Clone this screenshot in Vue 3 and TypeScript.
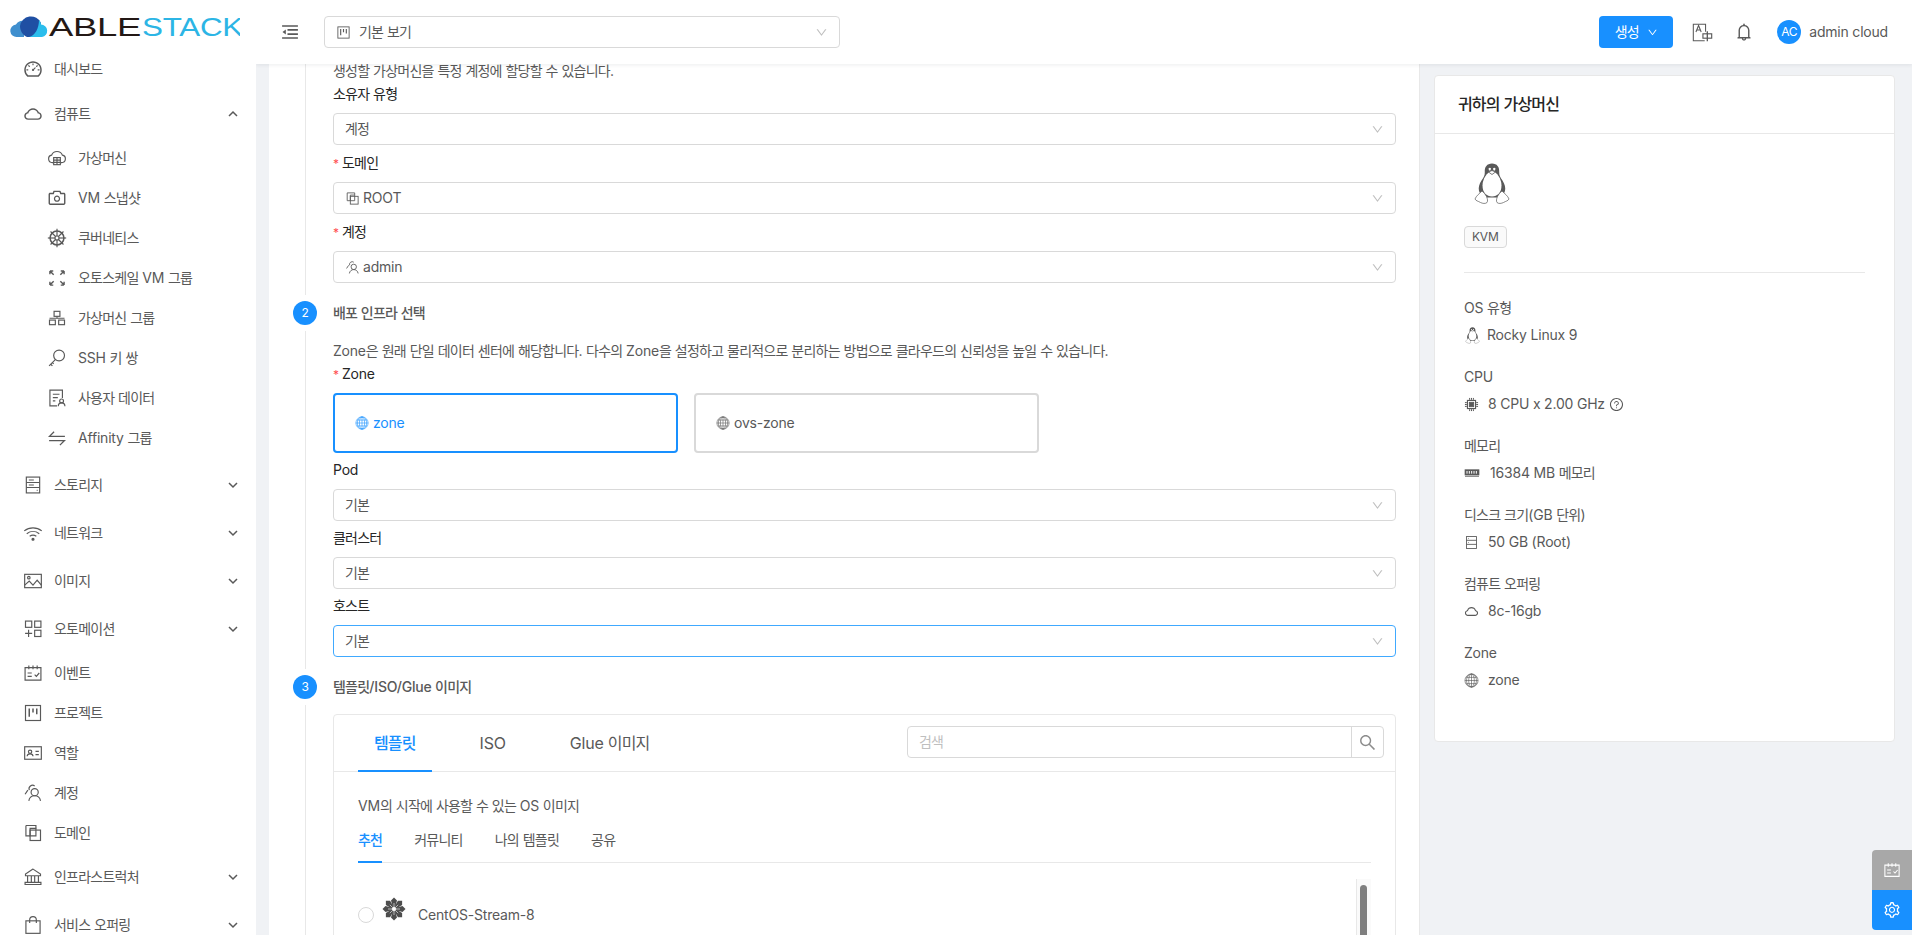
<template>
  <div class="layout">
    <aside class="sider">
      <div class="logo">
        <svg width="240" height="49" viewBox="0 0 240 49">
          <path d="M24 37H17a6.200 6.200 0 0 1-1-12.400A8 8 0 0 1 24 21z" fill="#3f8fce" />
          <path d="M20 26a11 11 0 0 1 21-3c0 7-3 14-9 14h-5c-4-2-7-6-7-11z" fill="#1f4fa3" />
          <path d="M39 20c1 1 2 3 2 4.500a6.300 6.300 0 0 1 1 12.500H29c6-1 10-9 10-17z" fill="#2bbdec" />
          <text x="49" y="36" class="logo-text" fill="#231815" textLength="92" lengthAdjust="spacingAndGlyphs">ABLE</text>
          <text x="142" y="36" class="logo-text" fill="#2cb5e5" textLength="101" lengthAdjust="spacingAndGlyphs">STACK</text>
        </svg>
      </div>
      <template v-for="item in menu" :key="item.label">
        <div class="menu-item" :class="{ submenu: item.arrow, first: item.label === '대시보드' }">
          <Icon :name="item.icon" :size="20" />
          <T :text="item.label" />
          <svg v-if="item.arrow" class="arrow" :class="{ up: item.children }" width="10" height="10" viewBox="0 0 10 10">
            <path d="M1 3l4 4 4-4" fill="none" stroke="currentColor" stroke-width="1.500" />
          </svg>
        </div>
        <div v-if="item.children" class="children">
          <div v-for="child in item.children" :key="child.label" class="menu-item child">
            <Icon :name="child.icon" :size="20" />
            <T :text="child.label" />
          </div>
        </div>
      </template>
    </aside>

    <div class="body">
      <header class="topbar">
        <Icon name="fold" :size="20" />
        <div class="select view-select">
          <Icon name="project" :size="15" />
          <T text="기본 보기" />
          <Icon name="down" :size="13" class="chev" />
        </div>
        <div class="top-right">
          <button class="create"><T text="생성" /> <Icon name="down" :size="11" /></button>
          <Icon name="translate" :size="21" class="translate" />
          <Icon name="bell" :size="20" class="bell" />
          <span class="avatar">AC</span>
          <span class="user">admin cloud</span>
        </div>
      </header>

      <div class="content">
        <main class="panel">
          <section class="step">
            <div class="rail"><span class="line"></span></div>
            <div class="step-body first-body">
              <p class="clip-desc"><T text="생성할 가상머신을 특정 계정에 할당할 수 있습니다." /></p>
              <div v-for="f in ownerFields" :key="f.label" class="field">
                <label class="label"><i v-if="f.required" class="req">*</i><T :text="f.label" /></label>
                <div class="select">
                  <Icon v-if="f.icon" :name="f.icon" :size="15" />
                  <T :text="f.value" />
                  <Icon name="down" :size="13" class="chev" />
                </div>
              </div>
            </div>
          </section>

          <section class="step">
            <div class="rail"><span class="dot">2</span><span class="line"></span></div>
            <div class="step-body">
              <h4 class="step-title"><T text="배포 인프라 선택" /></h4>
              <p class="desc"><T text="Zone은 원래 단일 데이터 센터에 해당합니다. 다수의 Zone을 설정하고 물리적으로 분리하는 방법으로 클라우드의 신뢰성을 높일 수 있습니다." /></p>
              <label class="label zone-label"><i class="req">*</i>Zone</label>
              <div class="zones">
                <div class="zone active"><Icon name="global" :size="14" /> zone</div>
                <div class="zone"><Icon name="global" :size="14" /> ovs-zone</div>
              </div>
              <div v-for="f in infraFields" :key="f" class="field compact">
                <label class="label"><T :text="f" /></label>
                <div class="select" :class="{ focused: f === '호스트' }">
                  <T text="기본" />
                  <Icon name="down" :size="13" class="chev" />
                </div>
              </div>
            </div>
          </section>

          <section class="step grow">
            <div class="rail"><span class="dot">3</span><span class="line"></span></div>
            <div class="step-body">
              <h4 class="step-title"><T text="템플릿/ISO/Glue 이미지" /></h4>
              <div class="image-card">
                <div class="image-tabs">
                  <div class="tabs-big">
                    <span v-for="(t, i) in bigTabs" :key="t" class="big-tab" :class="{ on: i === 0 }"><T :text="t" /></span>
                  </div>
                  <div class="search">
                    <span class="search-input"><T text="검색" /></span>
                    <span class="search-btn"><Icon name="search" :size="19" /></span>
                  </div>
                </div>
                <div class="image-body">
                  <p class="image-desc"><T text="VM의 시작에 사용할 수 있는 OS 이미지" /></p>
                  <div class="tabs-small">
                    <span v-for="(t, i) in smallTabs" :key="t" class="small-tab" :class="{ on: i === 0 }"><T :text="t" /></span>
                  </div>
                  <div class="list">
                    <div class="row">
                      <span class="radio"></span>
                      <Icon name="centos" :size="24" class="centos" />
                      <span>CentOS-Stream-8</span>
                    </div>
                    <div class="scrollbar"><span class="thumb"></span></div>
                  </div>
                </div>
              </div>
            </div>
          </section>
        </main>

        <aside class="summary">
          <div class="summary-title"><T text="귀하의 가상머신" /></div>
          <div class="summary-body">
            <Icon name="tux" :size="42" vb="0 0 36 42" class="tux" />
            <span class="tag">KVM</span>
            <div class="divider"></div>
            <div v-for="r in summary" :key="r.label" class="info">
              <div class="info-label"><T :text="r.label" /></div>
              <div class="info-value">
                <Icon :name="r.icon" :size="r.size || 15" :vb="r.vb" :style="{ marginRight: r.gap + 'px' }" />
                <T :text="r.value" />
                <Icon v-if="r.help" name="help" :size="15" class="help" />
              </div>
            </div>
          </div>
        </aside>
      </div>
    </div>

    <div class="float-btns">
      <span class="float grey"><Icon name="schedule" /></span>
      <span class="float blue"><Icon name="gear" /></span>
    </div>
  </div>
</template>

<script setup lang="ts">
import { h, type FunctionalComponent } from 'vue'

// 1024 grid ant style outlines go through this, hand drawn ones are 24 grid strokes
const ant = (d: string) => `<path transform="scale(.0234375)" fill="currentColor" stroke="none" d="${d}"/>`

const spokes = [0, 45, 90, 135, 180, 225, 270, 315]

const icons: Record<string, string> = {
  dashboard: ant('M924.8 385.6a446.7 446.7 0 00-96-142.4 446.7 446.7 0 00-142.4-96C631.1 123.8 572.5 112 512 112s-119.1 11.8-174.4 35.2a446.7 446.7 0 00-142.4 96 446.7 446.7 0 00-96 142.4C75.8 440.9 64 499.5 64 560c0 132.7 58.3 257.7 159.9 343.1l1.7 1.4c5.8 4.8 13.1 7.5 20.6 7.5h531.7c7.5 0 14.8-2.7 20.6-7.5l1.7-1.4C901.7 817.7 960 692.7 960 560c0-60.5-11.9-119.1-35.2-174.4zM761.4 836H262.6A371.12 371.12 0 01140 560c0-99.4 38.7-192.8 109-263 70.3-70.3 163.7-109 263-109 99.4 0 192.8 38.7 263 109 70.3 70.3 109 163.7 109 263 0 105.6-44.5 205.5-122.6 276zM623.5 421.5a8.03 8.03 0 00-11.3 0L527.7 506c-18.7-5-39.4-.2-54.1 14.5a55.95 55.95 0 000 79.2 55.95 55.95 0 0079.2 0 55.87 55.87 0 0014.5-54.1l84.5-84.5c3.1-3.1 3.1-8.2 0-11.3l-28.3-28.3zM490 320h44c4.4 0 8-3.6 8-8v-80c0-4.4-3.6-8-8-8h-44c-4.4 0-8 3.6-8 8v80c0 4.4 3.6 8 8 8zm260 218v44c0 4.4 3.6 8 8 8h80c4.4 0 8-3.6 8-8v-44c0-4.4-3.6-8-8-8h-80c-4.4 0-8 3.6-8 8zm12.7-197.2l-31.1-31.1a8.03 8.03 0 00-11.3 0l-56.6 56.6a8.03 8.03 0 000 11.3l31.1 31.1c3.1 3.1 8.2 3.1 11.3 0l56.6-56.6c3.1-3.1 3.1-8.2 0-11.3zm-458.6-31.1a8.03 8.03 0 00-11.3 0l-31.1 31.1a8.03 8.03 0 000 11.3l56.6 56.6c3.1 3.1 8.2 3.1 11.3 0l31.1-31.1c3.1-3.1 3.1-8.2 0-11.3l-56.6-56.6zM262 530h-80c-4.4 0-8 3.6-8 8v44c0 4.4 3.6 8 8 8h80c4.4 0 8-3.6 8-8v-44c0-4.4-3.6-8-8-8z'),
  cloud: ant('M811.4 418.7C765.6 297.9 648.9 212 512.2 212S258.8 297.8 213 418.6C127.3 441.1 64 519.1 64 612c0 110.5 89.5 200 199.9 200h496.2C870.5 812 960 722.5 960 612c0-92.7-63.1-170.7-148.6-193.3zm36.3 281a123.07 123.07 0 01-87.6 36.3H263.9c-33.1 0-64.2-12.9-87.6-36.3A123.3 123.3 0 01140 612c0-28 9.1-54.3 26.2-76.3a125.7 125.7 0 0166.1-43.7l37.9-9.9 13.9-36.6c8.6-22.8 20.6-44.1 35.7-63.4a245.6 245.6 0 0152.4-49.9c41.1-28.9 89.5-44.2 140-44.2s98.9 15.3 140 44.2c19.9 14 37.5 30.8 52.4 49.9 15.1 19.3 27.1 40.6 35.7 63.4l13.8 36.5 37.8 10c54.3 14.5 92.1 63.8 92.1 120 0 33.1-12.9 64.3-36.3 87.7z'),
  down: ant('M884 256h-75c-5.1 0-9.9 2.5-12.9 6.6L512 654.2 227.9 262.6c-3-4.1-7.8-6.6-12.9-6.6h-75c-6.5 0-10.3 7.4-6.5 12.7l352.6 486.1c12.8 17.6 39 17.6 51.7 0l352.6-486.1c3.9-5.3.1-12.7-6.4-12.7z'),
  camera: ant('M864 248H728l-32.4-90.8a32.07 32.07 0 00-30.2-21.2H358.6c-13.5 0-25.6 8.5-30.1 21.2L296 248H160c-44.2 0-80 35.8-80 80v456c0 44.2 35.8 80 80 80h704c44.2 0 80-35.8 80-80V328c0-44.2-35.8-80-80-80zm8 536c0 4.4-3.6 8-8 8H160c-4.4 0-8-3.6-8-8V328c0-4.4 3.6-8 8-8h186.7l17.1-47.8 22.9-64.2h250.5l22.9 64.2 17.1 47.8H864c4.4 0 8 3.6 8 8v456zM512 384c-88.4 0-160 71.6-160 160s71.6 160 160 160 160-71.6 160-160-71.6-160-160-160zm0 256c-53 0-96-43-96-96s43-96 96-96 96 43 96 96-43 96-96 96z'),
  search: ant('M909.6 854.5L649.9 594.8C690.2 542.7 712 479 712 412c0-80.2-31.3-155.4-87.9-212.1-56.6-56.7-132-87.9-212.1-87.9s-155.5 31.3-212.1 87.9C143.2 256.5 112 331.8 112 412c0 80.1 31.3 155.5 87.9 212.1C256.5 680.8 331.8 712 412 712c67 0 130.6-21.8 182.7-62l259.7 259.6a8.2 8.2 0 0011.6 0l43.6-43.5a8.2 8.2 0 000-11.6zM570.4 570.4C528 612.7 471.8 636 412 636s-116-23.3-158.4-65.6C211.3 528 188 471.8 188 412s23.3-116.1 65.6-158.4C296 211.3 352.2 188 412 188s116.1 23.2 158.4 65.6S636 352.2 636 412s-23.3 116.1-65.6 158.4z'),
  bell: ant('M816 768h-24V428c0-141.1-104.3-257.7-240-277.1V112c0-22.1-17.9-40-40-40s-40 17.9-40 40v38.9c-135.7 19.4-240 136-240 277.1v340h-24c-17.7 0-32 14.3-32 32v32c0 4.4 3.6 8 8 8h216c0 61.8 50.2 112 112 112s112-50.2 112-112h216c4.4 0 8-3.6 8-8v-32c0-17.7-14.3-32-32-32zM512 888c-26.5 0-48-21.5-48-48h96c0 26.5-21.500 48-48 48zM304 768V428c0-55.6 21.6-107.8 60.9-147.1S456.4 220 512 220c55.6 0 107.8 21.6 147.1 60.9S720 372.4 720 428v340H304z'),
  help: ant('M512 64C264.6 64 64 264.6 64 512s200.6 448 448 448 448-200.6 448-448S759.4 64 512 64zm0 820c-205.4 0-372-166.6-372-372s166.6-372 372-372 372 166.6 372 372-166.6 372-372 372z') + ant('M623.6 316.7C593.6 290.4 554 276 512 276s-81.6 14.5-111.6 40.7C369.2 344 352 380.7 352 420v7.6c0 4.4 3.6 8 8 8h48c4.4 0 8-3.6 8-8V420c0-44.1 43.1-80 96-80s96 35.9 96 80c0 31.1-22 59.6-56.1 72.7-21.2 8.1-39.2 22.3-52.1 40.9-13.1 19-19.9 41.8-19.9 64.9V620c0 4.4 3.6 8 8 8h48c4.4 0 8-3.6 8-8v-22.7a48.3 48.3 0 0130.9-44.8c59-22.7 97.1-74.7 97.1-132.5.1-39.3-17.1-76-48.3-103.3zM472 732a40 40 0 1080 0 40 40 0 10-80 0z'),
  gear: ant('M924.8 625.7l-65.5-56c3.1-19 4.7-38.4 4.7-57.8s-1.6-38.8-4.7-57.8l65.5-56a32.03 32.03 0 009.3-35.2l-.9-2.6a443.74 443.74 0 00-79.7-137.9l-1.8-2.1a32.12 32.12 0 00-35.1-9.5l-81.3 28.9c-30-24.6-63.5-44-99.7-57.6l-15.7-85a32.05 32.05 0 00-25.8-25.7l-2.7-.5c-52.1-9.4-106.9-9.4-159 0l-2.7.5a32.05 32.05 0 00-25.8 25.7l-15.8 85.4a351.86 351.86 0 00-99 57.4l-81.9-29.1a32 32 0 00-35.1 9.5l-1.8 2.1a446.02 446.02 0 00-79.7 137.9l-.9 2.6c-4.5 12.5-.8 26.5 9.3 35.2l66.3 56.6c-3.1 18.8-4.6 38-4.6 57.1 0 19.2 1.5 38.4 4.6 57.1L99 625.5a32.03 32.03 0 00-9.3 35.2l.9 2.6c18.1 50.4 44.9 96.9 79.7 137.9l1.8 2.1a32.12 32.12 0 0035.1 9.5l81.9-29.1c29.8 24.5 63.1 43.9 99 57.4l15.8 85.4a32.05 32.05 0 0025.8 25.7l2.7.5a449.4 449.4 0 00159 0l2.7-.5a32.05 32.05 0 0025.8-25.7l15.7-85a350 350 0 0099.7-57.6l81.3 28.9a32 32 0 0035.1-9.5l1.8-2.1c34.8-41.1 61.6-87.5 79.7-137.9l.9-2.6c4.5-12.3.8-26.3-9.3-35zM788.3 465.9c2.5 15.1 3.8 30.6 3.8 46.1s-1.3 31-3.8 46.1l-6.6 40.1 74.7 63.9a370.03 370.03 0 01-42.6 73.6L721 702.8l-31.4 25.8c-23.9 19.6-50.5 35-79.3 45.8l-38.1 14.3-17.9 97a377.5 377.5 0 01-85 0l-17.9-97.2-37.8-14.5c-28.5-10.8-55-26.2-78.7-45.7l-31.4-25.9-93.4 33.2c-17-22.9-31.2-47.6-42.6-73.6l75.5-64.5-6.5-40c-2.4-14.9-3.7-30.3-3.7-45.5 0-15.3 1.2-30.6 3.7-45.5l6.5-40-75.5-64.5c11.3-26.1 25.6-50.7 42.6-73.6l93.4 33.2 31.4-25.9c23.7-19.5 50.2-34.9 78.7-45.7l37.9-14.3 17.9-97.2c28.1-3.2 56.8-3.2 85 0l17.9 97 38.1 14.3c28.7 10.8 55.4 26.2 79.3 45.8l31.4 25.8 92.8-32.9c17 22.9 31.2 47.6 42.6 73.6L781.8 426l6.5 39.9zM512 326c-97.2 0-176 78.8-176 176s78.8 176 176 176 176-78.8 176-176-78.8-176-176-176zm79.2 255.2A111.6 111.6 0 01512 614c-29.9 0-58-11.7-79.2-32.8A111.6 111.6 0 01400 502c0-29.9 11.7-58 32.8-79.2C454 401.6 482.1 390 512 390c29.9 0 58 11.6 79.2 32.8A111.6 111.6 0 01624 502c0 29.9-11.7 58-32.8 79.2z'),
  vm: '<path d="M7.500 17.500H6.500a4.500 4.500 0 0 1-1-8.900 7 7 0 0 1 13 0 4.500 4.500 0 0 1-1 8.900h-1"/><rect x="8" y="11.500" width="8" height="8.500"/><path d="M8 14.500h8M8 17.200h8M12 11.500v8.500"/>',
  wheel: `<circle cx="12" cy="12" r="8.300" stroke-width="1.800"/><circle cx="12" cy="12" r="2.400"/>${spokes.map(a => `<path transform="rotate(${a} 12 12)" d="M12 1v8.500" stroke-width="1.400"/>`).join('')}`,
  scale: '<g stroke-width="1.700"><path d="M3.500 3.500l4.500 4.500M3.500 3.500h4M3.500 3.500v4M20.500 3.500l-4.500 4.500M20.500 3.500h-4M20.500 3.500v4M3.500 20.500l4.500-4.500M3.500 20.500h4M3.500 20.500v-4M20.500 20.500l-4.500-4.500M20.500 20.500h-4M20.500 20.500v-4"/></g>',
  cluster: '<rect x="8.500" y="4" width="7" height="6"/><rect x="3" y="14.500" width="7" height="5.500"/><rect x="14" y="14.500" width="7" height="5.500"/><path d="M3 12.300h18M12 10v2.300" stroke-width="1.200"/>',
  key: '<circle cx="14.500" cy="9" r="6.500"/><path d="M10 14l-7.500 7.500M4.500 19.500l2 2M6.500 17.500l1.500 1.500"/>',
  solution: '<path d="M12 21.500H3.500v-19h15V12M7 7.500h8M7 11.500h6M7 15.500h3"/><circle cx="17.500" cy="15.500" r="2.300"/><path d="M13.500 22c0-2.500 1.800-4.200 4-4.200s4 1.700 4 4.200"/>',
  swap: '<path d="M21.500 10H3l5.500-5.500M2.500 15h18.500L15.500 20.500" stroke-width="1.500"/>',
  storage: '<rect x="4" y="2.500" width="16" height="19"/><path d="M4 9h16M4 15h16M7 6h6M7 12h6M16.500 18.500h1" />',
  wifi: '<path d="M1.500 9.500c6-5 15-5 21 0M4.500 12.800c4.500-3.500 10.500-3.500 15 0M8 16c2.500-1.700 5.500-1.700 8 0"/><circle cx="12" cy="19.500" r="1.200" fill="currentColor"/>',
  picture: '<rect x="2" y="4" width="20" height="16"/><circle cx="7" cy="8" r="1.500"/><path d="M2 17l5.500-5 4.500 5 5-6 5 6"/>',
  apps: '<rect x="3" y="2.500" width="7.500" height="7.500"/><rect x="14" y="2.500" width="7.500" height="7.500"/><rect x="14" y="13.500" width="7.500" height="7.500"/><path d="M6.700 13v8.500M2.500 17.200h8.500"/>',
  schedule: '<path d="M2.500 5.500h19v15h-19zM7 3v4.500M12 3v4.500M17 3v4.500"/><path d="M5.500 12h5M5.500 16h5M14 14l2 2 3.500-4"/>',
  project: '<rect x="3" y="3" width="18" height="18"/><path d="M7.500 6.500v10M12 6.500v5M16.500 6.500v7" stroke-width="1.800"/>',
  idcard: '<rect x="2" y="4.500" width="20" height="15"/><circle cx="8.500" cy="10.500" r="2"/><path d="M5 16c0-2 1.500-3 3.500-3s3.500 1 3.500 3M15 10h4M15 14h4"/>',
  team: '<circle cx="14" cy="11" r="4.300"/><path d="M7 21.500c.5-3.800 3.500-6.200 7-6.200s6.500 2.400 7 6.200"/><path d="M7.500 8.500A4.300 4.300 0 0 1 14 3.500M5.800 8.500l-3.300 5"/>',
  block: '<path d="M3.500 3h12v3.500M8.500 15.500H3.500V3"/><rect x="8.500" y="8.500" width="12.500" height="12.500"/><path d="M8.500 6.500h7v9h-7z"/>',
  bank: '<path d="M12 2.500L3 8.500v2h18v-2zM5.500 10.500v8M10 10.500v8M14 10.500v8M18.500 10.500v8M2.500 18.500h19v2.500h-19z"/>',
  bag: '<rect x="3.500" y="7" width="17" height="15"/><path d="M8 9.500V6a4 4 0 0 1 8 0v3.500"/>',
  fold: '<path d="M2.500 4.800h19M9 9.500h12.500M9 14.500h12.500M2.500 19.200h19" stroke-width="2"/><path d="M7 9v6l-4-3z" fill="currentColor" stroke="none"/>',
  translate: '<path d="M14.500 21.500H1.500V2.500h14V11" stroke-width="1.200"/><path d="M4.500 11.500l3-7.500 3 7.500M5.600 9.200h4" stroke-width="1.200"/><rect x="12.500" y="13.500" width="10" height="5" stroke-width="1.300"/><path d="M17.500 10.500v11.500" stroke-width="1.500"/>',
  global: '<g stroke-width="1"><circle cx="12" cy="12" r="10.500"/><ellipse cx="12" cy="12" rx="4.500" ry="10.500"/><ellipse cx="12" cy="12" rx="8" ry="10.500"/><path d="M12 1.500v21M1.500 12h21M3.500 7h17M3.500 17h17"/></g>',
  cpu: '<rect x="5.500" y="5.500" width="13" height="13" stroke-width="1.800"/><rect x="8.500" y="8.500" width="7" height="7" fill="currentColor"/><path d="M9 1.500v3M12 1.500v3M15 1.500v3M9 19.500v3M12 19.500v3M15 19.500v3M1.500 9h3M1.500 12h3M1.500 15h3M19.500 9h3M19.500 12h3M19.500 15h3" stroke-width="1.600"/>',
  memory: '<rect x="1" y="6.500" width="22" height="9" fill="currentColor" stroke="none"/><path d="M4.500 9v4M8 9v4M11.500 9v4M15 9v4M18.500 9v4" stroke="#fff" stroke-width="1.500"/><path d="M2 17h20" stroke-width="2" stroke-dasharray="2 1"/>',
  disk: '<rect x="4" y="2.500" width="16" height="19"/><path d="M4 8.500h16M4 15h16M7 5.500h1M7 12h1"/>',
  centos: `${spokes.map(a => `<path transform="rotate(${a} 12 12)" d="M12 .5l3 3-1.500 5.500L12 10.500 10.500 9 9 3.500z" fill="currentColor" stroke="none"/>`).join('')}<path d="M12 6v12M6 12h12M7.800 7.800l8.400 8.400M16.200 7.800l-8.400 8.400" stroke="#fff" stroke-width=".6"/>`,
  tux: '<path d="M18 .5c-5 0-7.500 3.500-7.200 8.500.2 3.500-1.300 5.500-3.300 8.500-2.200 3.400-3.300 7-2.500 10.500 1 3 3 5 6 6.500h14c3-1.500 5-3.500 6-6.500.8-3.500-.3-7-2.500-10.500-2-3-3.500-5-3.300-8.500C25.500 4 23 .5 18 .5z" fill="currentColor" stroke="none"/><path d="M18 8c-5 1-9.500 8-9.500 14.500 0 7 4 11 9.500 11s9.500-4 9.500-11C27.500 16 23 9 18 8z" fill="#fff" stroke="none"/><path d="M14.500 5.500c.8-1 2-1 2.500 0l-.5 2h-1.500zM19 5.500c.8-1 2-1 2.500 0l-.5 2h-1.500z" fill="#fff" stroke="none"/><path d="M14.500 9l3.500-1.500 3.500 1.500-3.500 2.500z" fill="#fff" stroke="currentColor" stroke-width=".8"/><path d="M8 28c-2 2-6 5-7 8 1 2 3 2 5.500 3.500 2 1 5 1.500 6.500 0 1-1.500.5-3.500-.5-6-1-2-2.500-4-4.500-5.500zM28 28c2 2 6 5 7 8-1 2-3 2-5.500 3.500-2 1-5 1.500-6.500 0-1-1.500-.5-3.500.5-6 1-2 2.500-4 4.500-5.500z" fill="#fff" stroke-width=".7"/>',
}

const Icon: FunctionalComponent<{ name: string; size?: number; vb?: string }> = (p) =>
  h('svg', {
    width: p.size ?? 18,
    height: p.size ?? 18,
    viewBox: p.vb ?? '0 0 24 24',
    fill: 'none',
    stroke: 'currentColor',
    'stroke-width': 1.4,
    class: 'ico',
    innerHTML: icons[p.name],
  })
Icon.props = ['name', 'size', 'vb']

// Hangul in the reference runs narrower than Noto Sans CJK, so those runs get tighter tracking
const T: FunctionalComponent<{ text: string }> = (p) =>
  h(
    'span',
    p.text.split(/([가-힣]+)/).map((run) => (/[가-힣]/.test(run) ? h('span', { class: 'hg' }, run) : run)),
  )
T.props = ['text']

interface MenuEntry {
  label: string
  icon: string
  arrow?: boolean
  children?: { label: string; icon: string }[]
}

const menu: MenuEntry[] = [
  { label: '대시보드', icon: 'dashboard' },
  {
    label: '컴퓨트',
    icon: 'cloud',
    arrow: true,
    children: [
      { label: '가상머신', icon: 'vm' },
      { label: 'VM 스냅샷', icon: 'camera' },
      { label: '쿠버네티스', icon: 'wheel' },
      { label: '오토스케일 VM 그룹', icon: 'scale' },
      { label: '가상머신 그룹', icon: 'cluster' },
      { label: 'SSH 키 쌍', icon: 'key' },
      { label: '사용자 데이터', icon: 'solution' },
      { label: 'Affinity 그룹', icon: 'swap' },
    ],
  },
  { label: '스토리지', icon: 'storage', arrow: true },
  { label: '네트워크', icon: 'wifi', arrow: true },
  { label: '이미지', icon: 'picture', arrow: true },
  { label: '오토메이션', icon: 'apps', arrow: true },
  { label: '이벤트', icon: 'schedule' },
  { label: '프로젝트', icon: 'project' },
  { label: '역할', icon: 'idcard' },
  { label: '계정', icon: 'team' },
  { label: '도메인', icon: 'block' },
  { label: '인프라스트럭처', icon: 'bank', arrow: true },
  { label: '서비스 오퍼링', icon: 'bag', arrow: true },
]

const ownerFields = [
  { label: '소유자 유형', value: '계정', required: false, icon: '' },
  { label: '도메인', value: 'ROOT', required: true, icon: 'block' },
  { label: '계정', value: 'admin', required: true, icon: 'team' },
]
const infraFields = ['Pod', '클러스터', '호스트']
const bigTabs = ['템플릿', 'ISO', 'Glue 이미지']
const smallTabs = ['추천', '커뮤니티', '나의 템플릿', '공유']

const summary = [
  { label: 'OS 유형', value: 'Rocky Linux 9', icon: 'tux', vb: '0 0 36 42', size: 17, gap: 6 },
  { label: 'CPU', value: '8 CPU x 2.00 GHz', icon: 'cpu', gap: 9, help: true },
  { label: '메모리', value: '16384 MB 메모리', icon: 'memory', size: 16, gap: 10 },
  { label: '디스크 크기(GB 단위)', value: '50 GB (Root)', icon: 'disk', gap: 9 },
  { label: '컴퓨트 오퍼링', value: '8c-16gb', icon: 'cloud', gap: 9 },
  { label: 'Zone', value: 'zone', icon: 'global', gap: 9 },
]
</script>

<style>
html,
body {
  margin: 0;
  height: 100%;
  overflow: hidden;
}

/* rendered from a functional component, a scoped rule would not reach it */
.hg {
  letter-spacing: -0.055em;
}
</style>

<style scoped>
.layout {
  display: flex;
  height: 935px;
  overflow: hidden;
  font-family: Inter, "Noto Sans CJK KR", sans-serif;
  font-size: 14px;
  line-height: 22px;
  letter-spacing: -0.2px;
  color: #595959;
  background: #f0f2f5;
}

.ico {
  flex: none;
  display: block;
}

/* sidebar */
.sider {
  width: 256px;
  flex: none;
  display: flex;
  flex-direction: column;
  background: #fff;
  overflow: hidden;
  position: relative;
  z-index: 3;
}

.logo {
  height: 49px;
  flex: none;
}

.logo svg {
  display: block;
}

.logo-text {
  font-family: "Liberation Sans", sans-serif;
  font-size: 25px;
}

.menu-item {
  height: 40px;
  flex: none;
  display: flex;
  align-items: center;
  gap: 11px;
  padding: 0 18px 0 23px;
}

.menu-item.first {
  margin-bottom: 1px;
}

.menu-item.submenu {
  margin: 4px 0;
}

.children {
  flex: none;
  margin-bottom: 3px;
}

.menu-item.child {
  padding-left: 47px;
}

.arrow {
  margin-left: auto;
}

.arrow.up {
  transform: rotate(180deg);
}

/* top bar */
.body {
  flex: 1;
  min-width: 0;
  display: flex;
  flex-direction: column;
}

.topbar {
  height: 64px;
  flex: none;
  display: flex;
  align-items: center;
  gap: 24px;
  padding: 0 24px;
  background: #fff;
  box-shadow: 0 1px 4px rgba(0, 21, 41, 0.08);
  position: relative;
  z-index: 2;
}

.view-select {
  width: 516px;
  flex: none;
}

.top-right {
  margin-left: auto;
  display: flex;
  align-items: center;
}

.create {
  width: 74px;
  height: 32px;
  display: flex;
  align-items: center;
  justify-content: center;
  gap: 8px;
  background: #1890ff;
  color: #fff;
  border: 0;
  border-radius: 4px;
  font: inherit;
  letter-spacing: inherit;
}

.translate {
  margin-left: 19px;
}

.bell {
  margin-left: 21px;
}

.avatar {
  margin-left: 23px;
  width: 24px;
  height: 24px;
  border-radius: 50%;
  background: #1890ff;
  color: #fff;
  font-size: 12px;
  line-height: 24px;
  text-align: center;
}

.user {
  margin-left: 8px;
}

/* content */
.content {
  flex: 1;
  min-height: 0;
  display: flex;
  gap: 14px;
  padding: 0 17px 0 13px;
}

.panel {
  flex: 1;
  min-width: 0;
  background: #fff;
  padding: 0 23px 0 24px;
  display: flex;
  flex-direction: column;
  gap: 6px;
  border-right: 1px solid #e8e8e8;
}

.step {
  display: flex;
  gap: 16px;
  flex: none;
}

.step.grow {
  flex: 1;
  min-height: 0;
}

.rail {
  width: 24px;
  flex: none;
  display: flex;
  flex-direction: column;
  align-items: center;
}

.line {
  flex: 1;
  width: 1px;
  background: #e8e8e8;
}

.dot {
  width: 24px;
  height: 24px;
  margin-bottom: 6px;
  border-radius: 50%;
  background: #1890ff;
  color: #fff;
  font-size: 12px;
  line-height: 24px;
  text-align: center;
}

.step-body {
  flex: 1;
  min-width: 0;
  padding-bottom: 12px;
}

.clip-desc {
  margin: 0;
  height: 14px;
  line-height: 14px;
}

.first-body .field {
  margin-top: 7px;
}

.first-body .field:first-of-type {
  margin-top: 5px;
}

.step-title {
  margin: 0;
  height: 24px;
  font-size: 14px;
  font-weight: 500;
  line-height: 24px;
  color: #595959;
}

.desc {
  margin: 15px 0 0;
  height: 22px;
}

.label {
  display: block;
  height: 22px;
  color: #262626;
  margin-bottom: 8px;
}

.zone-label {
  margin-top: 1px;
}

.req {
  display: inline-block;
  width: 5px;
  margin-right: 4px;
  color: #ff4d4f;
  font-style: normal;
  font-size: 12px;
}

.field.compact {
  margin-top: 6px;
}

.select {
  height: 32px;
  box-sizing: border-box;
  border: 1px solid #d9d9d9;
  border-radius: 4px;
  background: #fff;
  display: flex;
  align-items: center;
  gap: 3px;
  padding: 0 11px;
}

.view-select {
  gap: 8px;
}

.select.focused {
  border-color: #40a9ff;
}

.chev {
  margin-left: auto;
  color: #bfbfbf;
}

.zones {
  display: flex;
  gap: 16px;
}

.zone {
  width: 345px;
  height: 60px;
  box-sizing: border-box;
  border: 2px solid #d9d9d9;
  border-radius: 4px;
  display: flex;
  align-items: center;
  gap: 4px;
  padding: 0 20px;
}

.zone.active {
  border-color: #1890ff;
  color: #1890ff;
}

/* template card */
.image-card {
  margin-top: 15px;
  border: 1px solid #e8e8e8;
  border-radius: 4px;
}

.image-tabs {
  height: 57px;
  box-sizing: border-box;
  border-bottom: 1px solid #e8e8e8;
  display: flex;
  justify-content: space-between;
  padding: 0 11px 0 24px;
}

.tabs-big {
  display: flex;
  gap: 32px;
}

.big-tab {
  font-size: 16px;
  padding: 0 16px;
  line-height: 56px;
  height: 57px;
  box-sizing: border-box;
}

.big-tab.on {
  color: #1890ff;
  font-weight: 500;
  border-bottom: 2px solid #1890ff;
}

.search {
  width: 477px;
  height: 32px;
  margin-top: 11px;
  display: flex;
  box-sizing: border-box;
  border: 1px solid #d9d9d9;
  border-radius: 4px;
}

.search-input {
  flex: 1;
  padding: 0 11px;
  line-height: 30px;
  color: #bfbfbf;
}

.search-btn {
  width: 31px;
  border-left: 1px solid #d9d9d9;
  display: flex;
  align-items: center;
  justify-content: center;
  color: #8c8c8c;
}

.image-body {
  padding: 23px 24px 0;
}

.image-desc {
  margin: 0;
  height: 22px;
}

.tabs-small {
  display: flex;
  gap: 32px;
  height: 46px;
  box-sizing: border-box;
  border-bottom: 1px solid #e8e8e8;
}

.small-tab {
  height: 46px;
  box-sizing: border-box;
  padding: 12px 0;
  border-bottom: 2px solid transparent;
}

.small-tab.on {
  color: #1890ff;
  font-weight: 500;
  border-color: #1890ff;
}

.list {
  margin-top: 16px;
  display: flex;
  justify-content: space-between;
  height: 120px;
}

.row {
  display: flex;
  align-items: center;
  height: 72px;
}

.radio {
  width: 16px;
  height: 16px;
  box-sizing: border-box;
  border: 1px solid #d9d9d9;
  border-radius: 50%;
  margin-right: 8px;
}

.centos {
  margin: -12px 12px 0 0;
  color: #4d4d4d;
}

.scrollbar {
  width: 15px;
  box-sizing: border-box;
  border-left: 1px solid #e8e8e8;
  background: #fafafa;
  padding: 6px 4px 0 3px;
}

.thumb {
  display: block;
  height: 100px;
  border-radius: 4px;
  background: #7f7f7f;
}

/* summary card */
.summary {
  width: 461px;
  flex: none;
  align-self: flex-start;
  margin-top: 11px;
  box-sizing: border-box;
  background: #fff;
  border: 1px solid #e8e8e8;
  border-radius: 4px;
}

.summary-title {
  height: 58px;
  box-sizing: border-box;
  border-bottom: 1px solid #e8e8e8;
  padding: 0 23px;
  line-height: 57px;
  font-size: 16px;
  font-weight: 500;
  color: #262626;
}

.summary-body {
  padding: 29px 29px 50px;
}

.tux {
  margin-left: 7px;
  color: #595959;
}

.tag {
  display: inline-block;
  margin-top: 21px;
  height: 22px;
  box-sizing: border-box;
  padding: 0 7px;
  border: 1px solid #d9d9d9;
  border-radius: 4px;
  background: #fafafa;
  font-size: 12px;
  line-height: 20px;
  vertical-align: top;
}

.divider {
  height: 1px;
  background: #e8e8e8;
  margin: 24px 0 24px;
}

.info {
  margin-bottom: 20px;
}

.info:last-child {
  margin-bottom: 0;
}

.info-label {
  height: 22px;
}

.info-value {
  margin-top: 5px;
  height: 22px;
  display: flex;
  align-items: center;
}

.help {
  margin-left: 4px;
}

/* floating buttons */
.float-btns {
  position: fixed;
  right: 0;
  top: 850px;
  z-index: 5;
}

.float {
  width: 40px;
  height: 40px;
  display: flex;
  align-items: center;
  justify-content: center;
  color: #fff;
}

.float.grey {
  background: #a8a8a8;
  border-radius: 4px 0 0 0;
}

.float.blue {
  background: #1890ff;
  border-radius: 0 0 0 4px;
}
</style>
